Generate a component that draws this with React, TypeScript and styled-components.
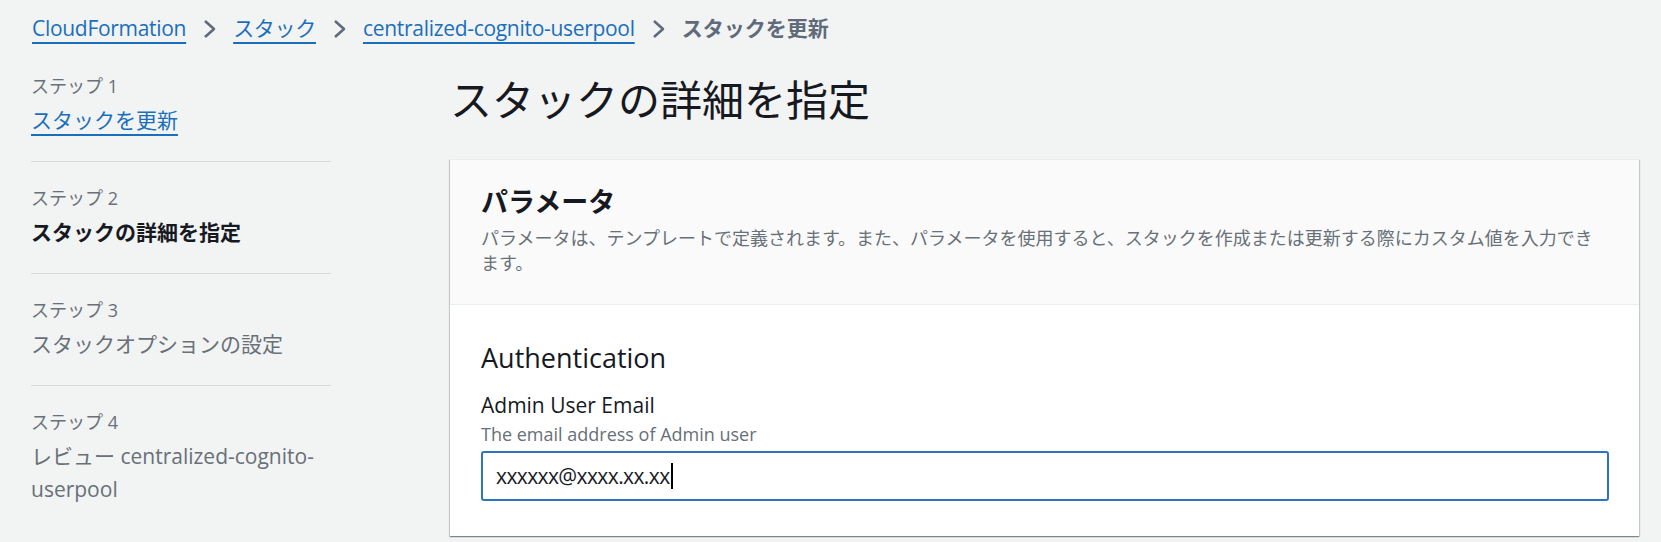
import styled, { createGlobalStyle } from "styled-components";

const GlobalStyle = createGlobalStyle`
  html, body {
    margin: 0;
    padding: 0;
    background: #f2f3f3;
  }
  body {
    font-family: "Open Sans", "Noto Sans CJK JP", sans-serif;
    color: #16191f;
  }
`;

const Page = styled.div`
  min-height: 542px;
  padding: 12px 22px 0 31px;
  box-sizing: border-box;
`;

const Crumbs = styled.nav`
  display: flex;
  align-items: center;
  gap: 17px;
  font-size: 21px;
  line-height: 33px;
  padding-left: 1px;
  letter-spacing: -0.3px;
`;

const Link = styled.a`
  color: #1a6fbd;
  text-decoration: underline;
  text-decoration-thickness: 2px;
  text-underline-offset: 6px;
  cursor: pointer;
`;

const Current = styled.span`
  color: #5f6b7a;
  font-weight: 700;
  letter-spacing: 0;
`;

const Layout = styled.div`
  display: grid;
  grid-template-columns: 300px 1fr;
  column-gap: 119px;
  margin-top: 29px;
`;

const Steps = styled.ol`
  list-style: none;
  margin: 0;
  padding: 0;
`;

const Step = styled.li`
  padding: 24px 0;
  border-top: 1px solid #d5dbdb;

  &:first-child {
    padding-top: 0;
    border-top: none;
  }
`;

const StepLabel = styled.div`
  font-size: 18px;
  line-height: 24px;
  color: #687078;
  margin-bottom: 6px;
`;

const StepTitle = styled.div<{ $state: "link" | "active" | "idle" }>`
  font-size: 21px;
  line-height: 33px;
  color: ${(p) => (p.$state === "active" ? "#16191f" : "#687078")};
  font-weight: ${(p) => (p.$state === "active" ? 700 : 400)};
`;

const Main = styled.main``;

const Heading = styled.h1`
  margin: 0;
  font-size: 42px;
  line-height: 52px;
  font-weight: 400;
  color: #16191f;
`;

const Card = styled.section`
  margin-top: 33px;
  background: #fff;
  border-top: 1px solid #eaeded;
  box-shadow: 0 1px 1px 0 rgba(0, 28, 36, 0.3),
    1px 1px 1px 0 rgba(0, 28, 36, 0.15), -1px 1px 1px 0 rgba(0, 28, 36, 0.15);
`;

const CardHeader = styled.header`
  background: #fafafa;
  border-bottom: 1px solid #eaeded;
  padding: 24px 30px 28px 31px;
`;

const CardTitle = styled.h2`
  margin: 0;
  font-size: 27px;
  line-height: 36px;
  font-weight: 700;
`;

const CardDesc = styled.p`
  margin: 6px 0 0;
  font-size: 18px;
  line-height: 25px;
  color: #687078;
`;

const CardBody = styled.div`
  padding: 35px 30px 35px 31px;
`;

const GroupTitle = styled.h3`
  margin: 0;
  font-size: 27px;
  line-height: 36px;
  font-weight: 400;
`;

const Field = styled.div`
  margin-top: 13px;
`;

const FieldLabel = styled.label`
  display: block;
  font-size: 21px;
  line-height: 33px;
`;

const FieldHint = styled.div`
  font-size: 18px;
  line-height: 24px;
  color: #687078;
`;

const InputBox = styled.div`
  margin-top: 5px;
  height: 50px;
  box-sizing: border-box;
  border: 2px solid #2b74bf;
  border-radius: 3px;
  padding: 0 13px;
  display: flex;
  align-items: center;
  font-size: 21px;
  letter-spacing: -0.6px;
  color: #16191f;
  background: #fff;
`;

const Caret = styled.span`
  display: inline-block;
  width: 2px;
  height: 26px;
  margin-left: 1px;
  background: #000;
`;

const Chevron = () => (
  <svg width="13" height="20" viewBox="0 0 13 20" aria-hidden="true">
    <polyline
      points="2,2 11,10 2,18"
      fill="none"
      stroke="#5f6b7a"
      strokeWidth="2.6"
      strokeLinejoin="round"
    />
  </svg>
);

const crumbs = ["CloudFormation", "スタック", "centralized-cognito-userpool"];

const steps: { label: string; title: string; state: "link" | "active" | "idle" }[] = [
  { label: "ステップ 1", title: "スタックを更新", state: "link" },
  { label: "ステップ 2", title: "スタックの詳細を指定", state: "active" },
  { label: "ステップ 3", title: "スタックオプションの設定", state: "idle" },
  { label: "ステップ 4", title: "レビュー centralized-cognito-userpool", state: "idle" },
];

export default function App() {
  return (
    <>
      <GlobalStyle />
      <Page>
        <Crumbs>
          {crumbs.map((c) => (
            <>
              <Link key={c}>{c}</Link>
              <Chevron />
            </>
          ))}
          <Current>スタックを更新</Current>
        </Crumbs>
        <Layout>
          <Steps>
            {steps.map((s) => (
              <Step key={s.label}>
                <StepLabel>{s.label}</StepLabel>
                <StepTitle $state={s.state}>
                  {s.state === "link" ? <Link>{s.title}</Link> : s.title}
                </StepTitle>
              </Step>
            ))}
          </Steps>
          <Main>
            <Heading>スタックの詳細を指定</Heading>
            <Card>
              <CardHeader>
                <CardTitle>パラメータ</CardTitle>
                <CardDesc>
                  パラメータは、テンプレートで定義されます。また、パラメータを使用すると、スタックを作成または更新する際にカスタム値を入力できます。
                </CardDesc>
              </CardHeader>
              <CardBody>
                <GroupTitle>Authentication</GroupTitle>
                <Field>
                  <FieldLabel>Admin User Email</FieldLabel>
                  <FieldHint>The email address of Admin user</FieldHint>
                  <InputBox>
                    xxxxxx@xxxx.xx.xx
                    <Caret />
                  </InputBox>
                </Field>
              </CardBody>
            </Card>
          </Main>
        </Layout>
      </Page>
    </>
  );
}
